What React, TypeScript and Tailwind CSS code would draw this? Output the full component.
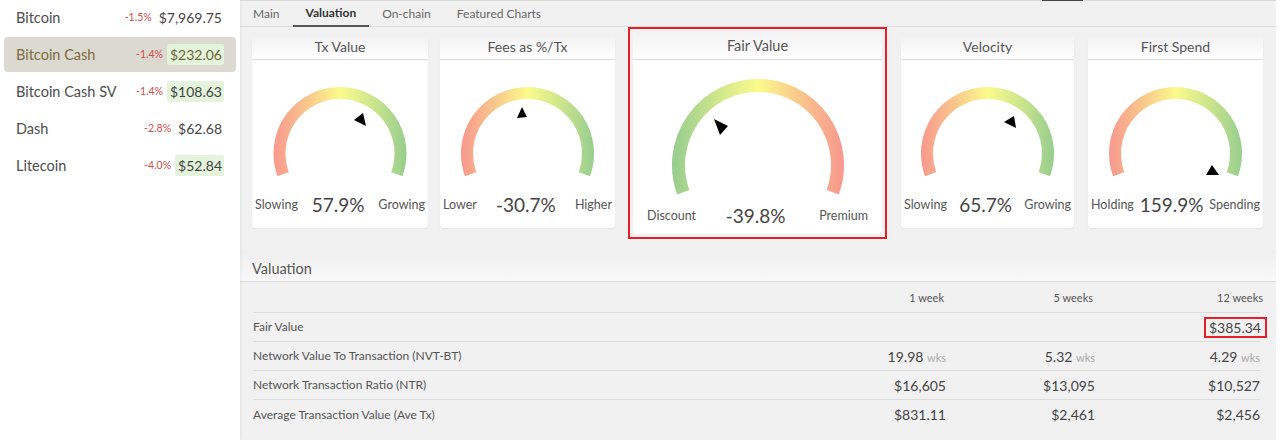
import React from "react";

type Pt = [number, number];

function arcPath(cx: number, cy: number, r: number) {
  const a = (20 * Math.PI) / 180;
  const x1 = cx - r * Math.cos(a);
  const y1 = cy + r * Math.sin(a);
  const x2 = cx + r * Math.cos(a);
  return `M ${x1} ${y1} A ${r} ${r} 0 1 1 ${x2} ${y1}`;
}

function Gauge({
  id,
  w,
  h,
  cx,
  cy,
  r,
  sw,
  reversed,
  tri,
}: {
  id: string;
  w: number;
  h: number;
  cx: number;
  cy: number;
  r: number;
  sw: number;
  reversed?: boolean;
  tri: Pt[];
}) {
  const red = "#f8908f";
  const green = "#8dc98e";
  return (
    <svg width={w} height={h} viewBox={`0 0 ${w} ${h}`} className="block">
      <defs>
        <linearGradient
          id={id}
          gradientUnits="userSpaceOnUse"
          x1={cx - r - sw}
          y1={0}
          x2={cx + r + sw}
          y2={0}
        >
          <stop offset="0" stopColor={reversed ? green : red} />
          <stop offset="0.28" stopColor={reversed ? "#cfe68d" : "#f9c88c"} />
          <stop offset="0.5" stopColor="#fbfb8c" />
          <stop offset="0.72" stopColor={reversed ? "#f9c88c" : "#cfe68d"} />
          <stop offset="1" stopColor={reversed ? red : green} />
        </linearGradient>
      </defs>
      <path d={arcPath(cx, cy, r)} fill="none" stroke={`url(#${id})`} strokeWidth={sw} />
      <polygon points={tri.map((p) => p.join(",")).join(" ")} fill="#000" />
    </svg>
  );
}

function SmallCard({
  title,
  id,
  w,
  left,
  right,
  value,
  tri,
  ml,
}: {
  title: string;
  id: string;
  w: string;
  left: string;
  right: string;
  value: string;
  tri: Pt[];
  ml: string;
}) {
  const width = w === "w-[176px]" ? 176 : w === "w-[173px]" ? 173 : 175;
  return (
    <div className={`${w} ${ml} mt-[10px] h-[191px] bg-white rounded-[4px] shadow-[0_1px_2px_rgba(0,0,0,0.05)] flex flex-col`}>
      <div className="h-[23px] pb-[3px] border-b border-[#dcdcdc] bg-gradient-to-b from-[#f2f2f2] to-white rounded-t-[4px] flex items-center justify-center text-[14px] text-[#555]">
        {title}
      </div>
      <Gauge id={id} w={width} h={130} cx={width / 2} cy={93.5} r={60.5} sw={12} tri={tri} />
      <div className="h-[30px] px-[3px] flex items-center justify-between">
        <span className="text-[12.5px] text-[#555]">{left}</span>
        <span className="text-[19px] text-[#444]">{value}</span>
        <span className="text-[12.5px] text-[#555]">{right}</span>
      </div>
    </div>
  );
}

const coins = [
  { name: "Bitcoin", ch: "-1.5%", price: "$7,969.75", green: false, sel: false },
  { name: "Bitcoin Cash", ch: "-1.4%", price: "$232.06", green: true, sel: true },
  { name: "Bitcoin Cash SV", ch: "-1.4%", price: "$108.63", green: true, sel: false },
  { name: "Dash", ch: "-2.8%", price: "$62.68", green: false, sel: false },
  { name: "Litecoin", ch: "-4.0%", price: "$52.84", green: true, sel: false },
];

function Wks({ v }: { v: string }) {
  return (
    <span>
      {v} <span className="text-[11px] text-[#aaa]">wks</span>
    </span>
  );
}

export default function App() {
  return (
    <div className="w-[1280px] h-[440px] overflow-hidden flex bg-white font-['Lato',sans-serif]">
      {/* Sidebar */}
      <div className="w-[240px] shrink-0 bg-white shadow-[1px_0_3px_rgba(0,0,0,0.06)] px-[4px] flex flex-col gap-[2px] relative z-10">
        {coins.map((c) => (
          <div
            key={c.name}
            className={`h-[35px] rounded-[4px] pl-[12px] pr-[12px] flex items-center justify-between ${
              c.sel ? "bg-[#dcd9d1]" : ""
            }`}
          >
            <span className={`text-[14.5px] ${c.sel ? "text-[#7d6d3c]" : "text-[#4d4d4d]"}`}>{c.name}</span>
            <span className="flex items-center">
              <span className="text-[10.5px] text-[#d14b4b] mr-[4px]">{c.ch}</span>
              <span
                className={`text-[14px] h-[21px] flex items-center pl-[3px] pr-[2px] rounded-[2px] ${
                  c.green ? "bg-[#e3f3dc]" : ""
                } ${c.sel ? "text-[#6f6535]" : "text-[#444]"}`}
              >
                {c.price}
              </span>
            </span>
          </div>
        ))}
      </div>

      {/* Main */}
      <div className="w-[1036px] shrink-0 bg-[#f1f1f1] flex flex-col">
        <div className="h-px bg-[#d9d9d9] flex">
          <div className="ml-[802px] w-[41px] bg-[#444]" />
        </div>
        <div className="h-[26px] border-b border-[#dcdcdc] flex text-[12px]">
          <div className="px-[13px] flex items-center text-[#666]">Main</div>
          <div className="px-[13px] flex items-center font-bold text-[#333] border-b-2 border-[#555] -mb-px">Valuation</div>
          <div className="px-[13px] flex items-center text-[#666]">On-chain</div>
          <div className="px-[13px] flex items-center text-[#666]">Featured Charts</div>
        </div>

        {/* Gauges */}
        <div className="h-[212px] flex items-start pl-[12px]">
          <SmallCard
            title="Tx Value"
            id="g1"
            w="w-[176px]"
            ml=""
            left="Slowing"
            right="Growing"
            value="57.9%"
            tri={[[102, 60], [111, 53], [114, 66]]}
          />
          <SmallCard
            title="Fees as %/Tx"
            id="g2"
            w="w-[175px]"
            ml="ml-[12px]"
            left="Lower"
            right="Higher"
            value="-30.7%"
            tri={[[82, 47], [77, 58], [87, 57]]}
          />
          <div className="ml-[13px] w-[259px] h-[212px] border-2 border-[#e3202a] p-[3px]">
            <div className="h-[202px] bg-white rounded-[4px] flex flex-col">
              <div className="h-[28px] border-b border-[#dcdcdc] bg-gradient-to-b from-[#f2f2f2] to-white rounded-t-[4px] flex items-center justify-center text-[14.5px] text-[#555]">
                Fair Value
              </div>
              <Gauge
                id="g3"
                w={249}
                h={140}
                cx={125}
                cy={105}
                r={79.5}
                sw={13}
                reversed
                tri={[[81, 59], [95, 66], [87, 75]]}
              />
              <div className="h-[32px] px-[14px] flex items-center justify-between">
                <span className="text-[12.5px] text-[#555]">Discount</span>
                <span className="text-[19px] text-[#444] mr-[4px]">-39.8%</span>
                <span className="text-[12.5px] text-[#555]">Premium</span>
              </div>
            </div>
          </div>
          <SmallCard
            title="Velocity"
            id="g4"
            w="w-[173px]"
            ml="ml-[14px]"
            left="Slowing"
            right="Growing"
            value="65.7%"
            tri={[[103, 62], [113, 56], [115, 68]]}
          />
          <SmallCard
            title="First Spend"
            id="g5"
            w="w-[175px]"
            ml="ml-[14px]"
            left="Holding"
            right="Spending"
            value="159.9%"
            tri={[[124, 105], [118, 115], [131, 115]]}
          />
        </div>

        {/* Valuation table */}
        <div className="mt-[11px] h-[32px] border-b border-[#dcdcdc] bg-gradient-to-b from-[#efefef] to-[#f9f9f9] pl-[12px] pt-[8px] text-[14.5px] text-[#555]">
          Valuation
        </div>
        <div className="grid grid-cols-[1fr_150px_149px_165px] pr-[16px] pl-[13px] text-[#555]">
          <div className="h-[31px] border-b border-[#dcdcdc] col-span-4 grid grid-cols-subgrid items-end pb-[6px] text-[11px]">
            <div />
            <div className="text-right pr-[2px]">1 week</div>
            <div className="text-right pr-[2px]">5 weeks</div>
            <div className="text-right -mr-[3px]">12 weeks</div>
          </div>
          {[
            { l: "Fair Value", v: [null, null, "fv"] },
            { l: "Network Value To Transaction (NVT-BT)", v: ["w19.98", "w5.32", "w4.29"] },
            { l: "Network Transaction Ratio (NTR)", v: ["$16,605", "$13,095", "$10,527"] },
            { l: "Average Transaction Value (Ave Tx)", v: ["$831.11", "$2,461", "$2,456"] },
          ].map((row, i) => (
            <div
              key={row.l}
              className={`h-[29px] col-span-4 grid grid-cols-subgrid items-center ${
                i < 3 ? "border-b border-[#dcdcdc]" : ""
              }`}
            >
              <div className="text-[12px] text-[#555]">{row.l}</div>
              {row.v.map((v, j) => (
                <div key={j} className="flex justify-end text-[14px] text-[#444]">
                  {v === null ? null : v === "fv" ? (
                    <span className="border-2 border-[#e3202a] pl-[3px] pr-[4px] h-[21px] flex items-center -mr-[7px]">
                      $385.34
                    </span>
                  ) : v.startsWith("w") ? (
                    <Wks v={v.slice(1)} />
                  ) : (
                    v
                  )}
                </div>
              ))}
            </div>
          ))}
        </div>
      </div>
      <div className="flex-1 bg-white" />
    </div>
  );
}
